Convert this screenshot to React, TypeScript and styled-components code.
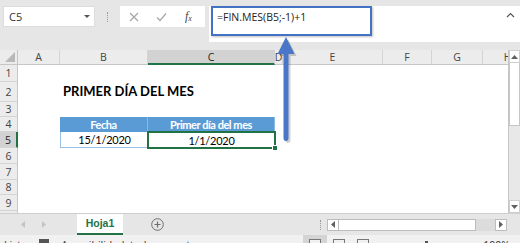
import React from "react";
import styled, { createGlobalStyle, css } from "styled-components";

const GlobalStyle = createGlobalStyle`
  html, body { margin: 0; padding: 0; background: #ffffff; }
  body { font-family: "Open Sans", "Liberation Sans", sans-serif; }
`;

type Kind = "title" | "th" | "td" | "sel";

const COLS = [
  { name: "A", w: 42 },
  { name: "B", w: 88 },
  { name: "C", w: 127 },
  { name: "D", w: 8 },
  { name: "E", w: 100 },
  { name: "F", w: 49 },
  { name: "G", w: 51 },
  { name: "H", w: 50 },
];
const ROWS = [17, 20, 15, 15, 16, 16, 16, 15, 16, 16];
const ACTIVE_COL = "C";
const ACTIVE_ROW = 5;

const CELLS: Record<string, { text: string; kind: Kind }> = {
  B2: { text: "PRIMER DÍA DEL MES", kind: "title" },
  B4: { text: "Fecha", kind: "th" },
  C4: { text: "Primer día del mes", kind: "th" },
  B5: { text: "15/1/2020", kind: "td" },
  C5: { text: "1/1/2020", kind: "sel" },
};

const App = () => {
  return (
    <>
      <GlobalStyle />
      <Window>
        <FormulaArea>
          <NameBox>
            <span>C5</span>
            <DropCaret />
          </NameBox>
          <Grip />
          <FxBox>
            <svg width="10" height="10" viewBox="0 0 10 10">
              <path d="M1 1 L9 9 M9 1 L1 9" stroke="#a6a6a6" strokeWidth="1.2" fill="none" />
            </svg>
            <svg width="11" height="10" viewBox="0 0 11 10">
              <path d="M1 5.5 L4 8.5 L10 1.5" stroke="#a6a6a6" strokeWidth="1.2" fill="none" />
            </svg>
            <FxLabel>
              f<sub>x</sub>
            </FxLabel>
          </FxBox>
          <FormulaBar>
            <FormulaHighlight>=FIN.MES(B5;-1)+1</FormulaHighlight>
            <CollapseIcon width="9" height="6" viewBox="0 0 9 6">
              <path d="M1 5 L4.5 1.5 L8 5" stroke="#555" strokeWidth="1.2" fill="none" />
            </CollapseIcon>
          </FormulaBar>
        </FormulaArea>

        <SheetArea>
          <Grid>
            <Corner>
              <svg width="10" height="10" viewBox="0 0 10 10">
                <path d="M10 0 L10 10 L0 10 Z" fill="#b9b9b9" />
              </svg>
            </Corner>
            {COLS.map((c) => (
              <ColHead key={c.name} $active={c.name === ACTIVE_COL}>
                {c.name}
              </ColHead>
            ))}
            {ROWS.map((_, i) => {
              const r = i + 1;
              return (
                <React.Fragment key={r}>
                  <RowHead $active={r === ACTIVE_ROW}>{r}</RowHead>
                  {COLS.map((c) => {
                    const cell = CELLS[`${c.name}${r}`];
                    return (
                      <Cell key={c.name} $kind={cell?.kind}>
                        {cell?.text}
                      </Cell>
                    );
                  })}
                </React.Fragment>
              );
            })}
          </Grid>
          <VScroll>
            <ScrollBtn>
              <svg width="7" height="4" viewBox="0 0 7 4">
                <path d="M0 4 L3.5 0 L7 4 Z" fill="#606060" />
              </svg>
            </ScrollBtn>
            <VThumb />
            <Track />
            <ScrollBtn>
              <svg width="7" height="4" viewBox="0 0 7 4">
                <path d="M0 0 L7 0 L3.5 4 Z" fill="#606060" />
              </svg>
            </ScrollBtn>
          </VScroll>
        </SheetArea>

        <TabBar>
          <TabNav>
            <svg width="4" height="7" viewBox="0 0 4 7">
              <path d="M4 0 L0 3.5 L4 7 Z" fill="#c4c4c4" />
            </svg>
            <svg width="4" height="7" viewBox="0 0 4 7">
              <path d="M0 0 L4 3.5 L0 7 Z" fill="#c4c4c4" />
            </svg>
          </TabNav>
          <SheetTab>Hoja1</SheetTab>
          <AddSheet>
            <svg width="13" height="13" viewBox="0 0 13 13">
              <circle cx="6.5" cy="6.5" r="5.8" stroke="#6e6e6e" strokeWidth="1" fill="none" />
              <path d="M6.5 3.5 V9.5 M3.5 6.5 H9.5" stroke="#6e6e6e" strokeWidth="1.2" />
            </svg>
          </AddSheet>
          <TabSpacer />
          <Grip $small />
          <HScroll>
            <HScrollBtn>
              <svg width="4" height="7" viewBox="0 0 4 7">
                <path d="M4 0 L0 3.5 L4 7 Z" fill="#606060" />
              </svg>
            </HScrollBtn>
            <HThumb />
            <HTrack />
            <HScrollBtn>
              <svg width="4" height="7" viewBox="0 0 4 7">
                <path d="M0 0 L4 3.5 L0 7 Z" fill="#606060" />
              </svg>
            </HScrollBtn>
          </HScroll>
        </TabBar>

        <StatusBar>
          <StatusText>Listo</StatusText>
          <StatusIcon />
          <StatusText>Accesibilidad: todo correcto</StatusText>
          <TabSpacer />
          <ViewIcon $on />
          <ViewIcon />
          <ViewIcon />
          <ZoomSlider>
            <span />
          </ZoomSlider>
          <StatusText>100%</StatusText>
        </StatusBar>

        <Arrow width="26" height="112" viewBox="0 0 26 112">
          <path
            d="M14 5 L22.5 22 L16.5 22 L16.5 106 Q16.5 109 14 109 Q11.5 109 11.5 106 L11.5 22 L5.5 22 Z"
            fill="rgba(0,0,0,0.18)"
          />
          <path
            d="M12 3 L20.5 20 L14.5 20 L14.5 104 Q14.5 107 12 107 Q9.5 107 9.5 104 L9.5 20 L3.5 20 Z"
            fill="#4a76c8"
          />
        </Arrow>
      </Window>
    </>
  );
};

export default App;

const Window = styled.div`
  position: relative;
  width: 520px;
  height: 243px;
  overflow: hidden;
  display: flex;
  flex-direction: column;
  background: #e6e6e6;
`;

const FormulaArea = styled.div`
  height: 50px;
  flex-shrink: 0;
  display: flex;
  align-items: flex-start;
  padding-top: 6px;
  box-sizing: border-box;
  background: #e6e6e6;
`;

const NameBox = styled.div`
  margin-left: 3px;
  width: 92px;
  height: 21px;
  box-sizing: border-box;
  background: #fff;
  border: 1px solid #dcdcdc;
  display: flex;
  align-items: center;
  justify-content: space-between;
  padding: 0 4px 0 5px;
  font-size: 11px;
  color: #333;
`;

const DropCaret = styled.span`
  width: 0;
  height: 0;
  border-left: 3px solid transparent;
  border-right: 3px solid transparent;
  border-top: 3px solid #555;
`;

const Grip = styled.div<{ $small?: boolean }>`
  width: ${({ $small }) => ($small ? "14px" : "25px")};
  height: 10px;
  margin-top: ${({ $small }) => ($small ? "0" : "6px")};
  display: flex;
  justify-content: center;
  &::before {
    content: "";
    border-left: 1.5px dotted #9a9a9a;
    height: 100%;
  }
`;

const FxBox = styled.div`
  width: 85px;
  height: 21px;
  background: #fff;
  display: flex;
  align-items: center;
  gap: 17px;
  padding-left: 9px;
  box-sizing: border-box;
`;

const FxLabel = styled.span`
  margin-left: 1px;
  font-family: "Liberation Serif", serif;
  font-style: italic;
  font-size: 12px;
  color: #444;
  sub {
    font-size: 8px;
    vertical-align: -1px;
  }
`;

const FormulaBar = styled.div`
  position: relative;
  margin-left: 4px;
  flex: 1;
  height: 36px;
  background: #fff;
  display: flex;
  align-items: flex-start;
  padding-left: 2px;
`;

const FormulaHighlight = styled.div`
  width: 161px;
  height: 30px;
  box-sizing: border-box;
  border: 2px solid #4472c4;
  box-shadow: 1px 1px 2px rgba(0, 0, 0, 0.25);
  padding: 2px 0 0 4px;
  font-size: 10.5px;
  color: #222;
`;

const CollapseIcon = styled.svg`
  margin: 6px 5px 0 auto;
`;

const SheetArea = styled.div`
  height: 163px;
  flex-shrink: 0;
  display: flex;
  background: #fff;
`;

const Grid = styled.div`
  width: 508px;
  overflow: hidden;
  display: grid;
  grid-template-columns: 18px ${COLS.map((c) => `${c.w}px`).join(" ")};
  grid-template-rows: 15px ${ROWS.map((h) => `${h}px`).join(" ")};
  background: #fff;
`;

const headBase = css`
  box-sizing: border-box;
  background: #ececec;
  font-size: 10.5px;
  color: #444;
  display: flex;
  align-items: center;
  justify-content: center;
  overflow: hidden;
`;

const Corner = styled.div`
  ${headBase};
  align-items: flex-end;
  justify-content: flex-end;
  padding: 0 2px 2px 0;
  border-right: 1px solid #c6c6c6;
  border-bottom: 1px solid #c6c6c6;
`;

const ColHead = styled.div<{ $active?: boolean }>`
  ${headBase};
  border-right: 1px solid #d4d4d4;
  border-bottom: 1px solid #c6c6c6;
  ${({ $active }) =>
    $active &&
    css`
      background: #d2d2d2;
      color: #222;
      border-bottom: 2px solid #217346;
    `}
`;

const RowHead = styled.div<{ $active?: boolean }>`
  ${headBase};
  border-right: 1px solid #c6c6c6;
  border-bottom: 1px solid #d4d4d4;
  ${({ $active }) =>
    $active &&
    css`
      background: #d2d2d2;
      color: #222;
      border-right: 2px solid #217346;
    `}
`;

const Cell = styled.div<{ $kind?: Kind }>`
  box-sizing: border-box;
  display: flex;
  align-items: flex-end;
  justify-content: center;
  padding-bottom: 1px;
  white-space: nowrap;
  font-family: Lato, "Liberation Sans", sans-serif;
  font-size: 11px;
  letter-spacing: -0.25px;
  color: #000;
  ${({ $kind }) =>
    $kind === "title" &&
    css`
      justify-content: flex-start;
      padding-left: 3px;
      padding-bottom: 3px;
      font-size: 13px;
      letter-spacing: 0;
      font-weight: 700;
    `}
  ${({ $kind }) =>
    $kind === "th" &&
    css`
      background: #5b9bd5;
      color: #fff;
      font-weight: 700;
      letter-spacing: -0.45px;
      border-right: 1px solid #8bb9e3;
    `}
  ${({ $kind }) =>
    $kind === "td" &&
    css`
      border-left: 1px solid #9bc2e6;
      border-bottom: 1px solid #9bc2e6;
    `}
  ${({ $kind }) =>
    $kind === "sel" &&
    css`
      position: relative;
      outline: 2px solid #217346;
      outline-offset: -1px;
      &::after {
        content: "";
        position: absolute;
        right: -3px;
        bottom: -3px;
        width: 4px;
        height: 4px;
        background: #217346;
        border: 1px solid #fff;
      }
    `}
`;

const VScroll = styled.div`
  width: 12px;
  display: flex;
  flex-direction: column;
  border-left: 1px solid #c6c6c6;
  box-sizing: border-box;
  background: #e8e8e8;
`;

const ScrollBtn = styled.div`
  height: 11px;
  flex-shrink: 0;
  background: #fff;
  border: 1px solid #cfcfcf;
  display: flex;
  align-items: center;
  justify-content: center;
`;

const VThumb = styled.div`
  height: 62px;
  flex-shrink: 0;
  background: #fff;
  border: 1px solid #c6c6c6;
  border-top: none;
`;

const Track = styled.div`
  flex: 1;
`;

const TabBar = styled.div`
  height: 22px;
  flex-shrink: 0;
  display: flex;
  align-items: center;
  background: #e6e6e6;
  border-top: 1px solid #cfcfcf;
  box-sizing: border-box;
`;

const TabNav = styled.div`
  width: 77px;
  display: flex;
  gap: 17px;
  padding-left: 21px;
  box-sizing: border-box;
`;

const SheetTab = styled.div`
  width: 46px;
  height: 21px;
  margin-top: -1px;
  box-sizing: border-box;
  background: #fff;
  border-bottom: 2px solid #217346;
  color: #217346;
  font-family: "Liberation Sans", sans-serif;
  font-weight: 700;
  font-size: 10.5px;
  display: flex;
  align-items: center;
  justify-content: center;
`;

const AddSheet = styled.div`
  margin-left: 28px;
  display: flex;
`;

const TabSpacer = styled.div`
  flex: 1;
`;

const HScroll = styled.div`
  width: 180px;
  height: 12px;
  margin-right: 13px;
  display: flex;
  background: #dcdcdc;
`;

const HScrollBtn = styled.div`
  width: 12px;
  box-sizing: border-box;
  background: #fff;
  border: 1px solid #bdbdbd;
  display: flex;
  align-items: center;
  justify-content: center;
`;

const HThumb = styled.div`
  width: 137px;
  background: #fff;
  border: 1px solid #bdbdbd;
  border-left: none;
  box-sizing: border-box;
`;

const HTrack = styled.div`
  flex: 1;
`;

const StatusBar = styled.div`
  flex: 1;
  display: flex;
  align-items: flex-start;
  gap: 12px;
  padding: 3px 10px 0 4px;
  background: #f1f1f1;
  overflow: hidden;
`;

const StatusText = styled.span`
  font-size: 10.5px;
  color: #333;
  white-space: nowrap;
`;

const StatusIcon = styled.span`
  width: 10px;
  height: 9px;
  margin-top: 1px;
  background: #555;
`;

const ViewIcon = styled.span<{ $on?: boolean }>`
  width: 12px;
  height: 10px;
  margin-top: 1px;
  border: 1px solid #777;
  box-sizing: border-box;
  outline: ${({ $on }) => ($on ? "6px solid #d4d4d4" : "none")};
`;

const ZoomSlider = styled.div`
  width: 90px;
  height: 1px;
  margin-top: 7px;
  background: #888;
  display: flex;
  justify-content: center;
  span {
    width: 3px;
    height: 8px;
    margin-top: -4px;
    background: #555;
  }
`;

const Arrow = styled.svg`
  position: absolute;
  left: 274px;
  top: 34px;
`;
